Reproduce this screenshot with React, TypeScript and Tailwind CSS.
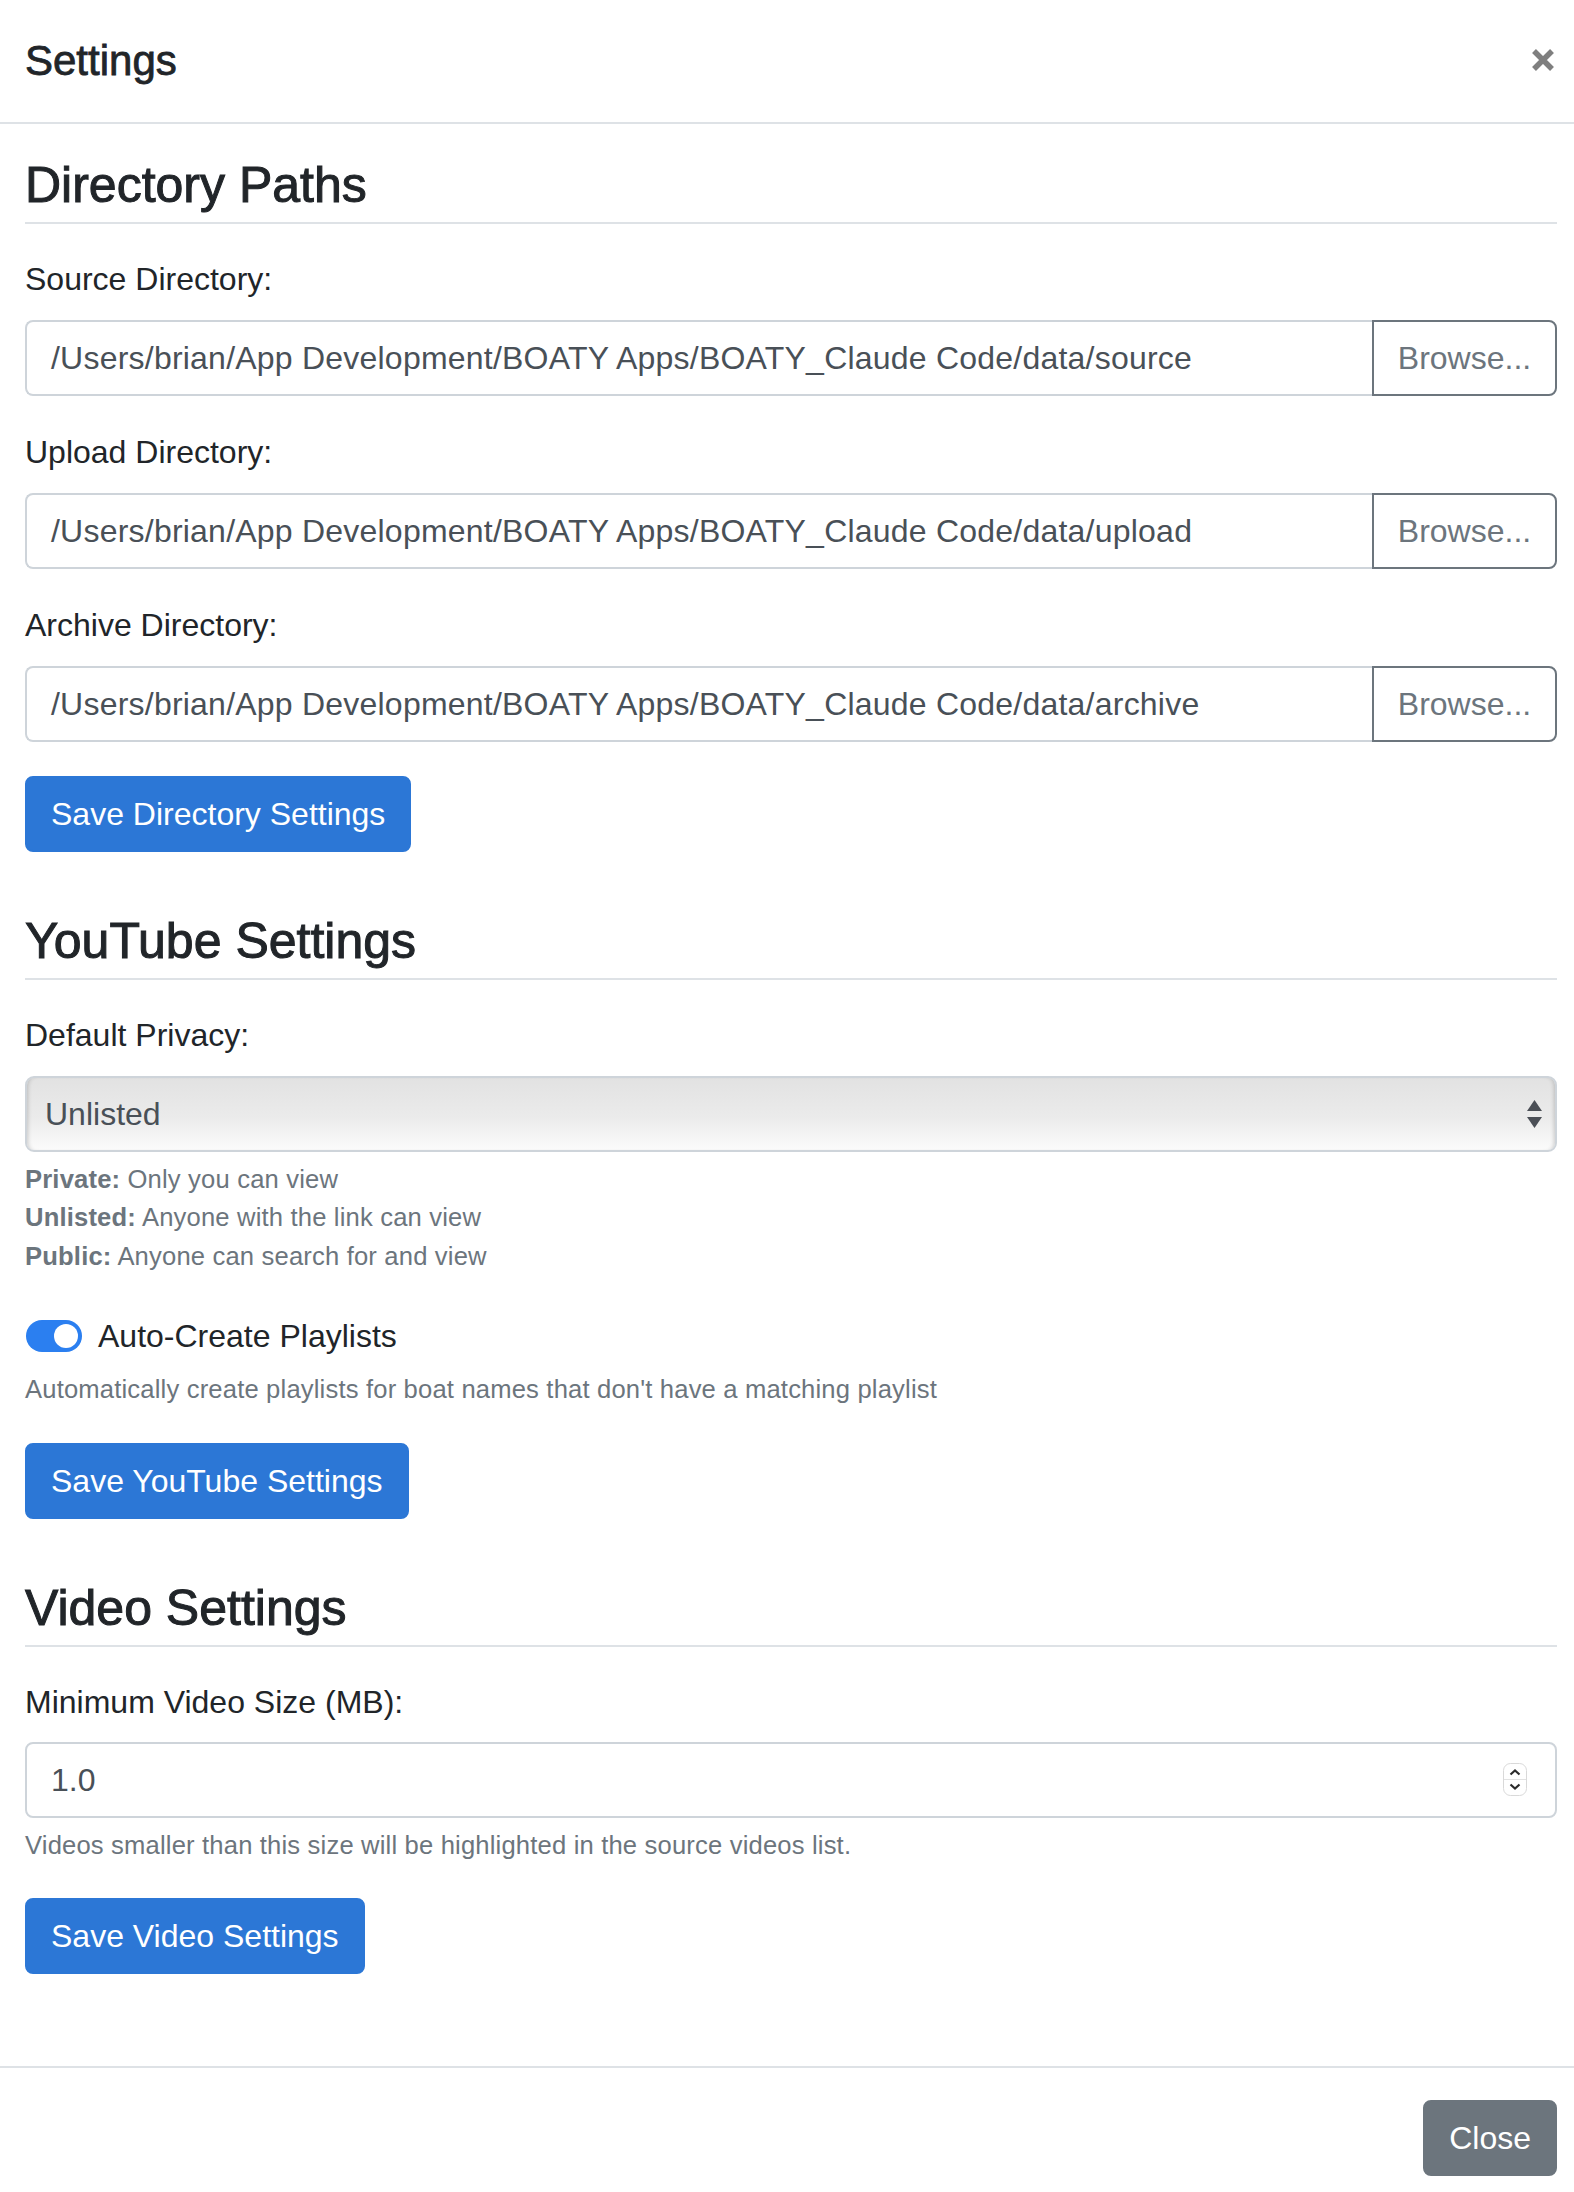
import React from 'react';

/**
 * Settings modal: directory paths, YouTube and video settings
 */

const paths = [
  { label: 'Source Directory:', value: '/Users/brian/App Development/BOATY Apps/BOATY_Claude Code/data/source' },
  { label: 'Upload Directory:', value: '/Users/brian/App Development/BOATY Apps/BOATY_Claude Code/data/upload' },
  { label: 'Archive Directory:', value: '/Users/brian/App Development/BOATY Apps/BOATY_Claude Code/data/archive' },
];

const SectionTitle: React.FC<{ title: string; first?: boolean }> = ({ title, first }) => (
  <h4
    className={`${first ? '' : 'mt-[60px]'} border-b-2 border-[#dee2e6] pb-[8px] text-[50px] leading-[58px] text-[#212529] [-webkit-text-stroke:1px_#212529]`}
  >
    {title}
  </h4>
);

const Label: React.FC<{ children: React.ReactNode; className?: string }> = ({ children, className }) => (
  <div className={`text-[32px] leading-[48px] text-[#212529] ${className ?? ''}`}>{children}</div>
);

const PrimaryButton: React.FC<{ children: React.ReactNode }> = ({ children }) => (
  <button className="mt-[34px] block h-[76px] rounded-[8px] border-2 border-[#2c77d6] bg-[#2c77d6] px-[24px] text-[32px] leading-[48px] text-white">
    {children}
  </button>
);

const SelectArrows = () => (
  <svg width="15" height="28" viewBox="0 0 15 28">
    <polygon points="0,11 7.5,0 15,11" fill="#4b4f56" />
    <polygon points="0,17 15,17 7.5,28" fill="#4b4f56" />
  </svg>
);

const Spinner = () => (
  <svg width="24" height="33" viewBox="0 0 24 33">
    <rect x="0.5" y="0.5" width="23" height="32" rx="7" fill="#ffffff" stroke="#d9d9d9" />
    <line x1="1" y1="16.5" x2="23" y2="16.5" stroke="#e2e2e2" />
    <path d="M7.5 11.5 L12 7.5 L16.5 11.5" fill="none" stroke="#2b2b2b" strokeWidth="2.2" />
    <path d="M7.5 21.5 L12 25.5 L16.5 21.5" fill="none" stroke="#2b2b2b" strokeWidth="2.2" />
  </svg>
);

export default function App() {
  return (
    <div className="w-[1574px] bg-white font-['Liberation_Sans',Arial,Helvetica,sans-serif] text-[#212529]">
      {/* Header */}
      <div className="flex h-[124px] items-center justify-between border-b-2 border-[#dee2e6] pl-[25px] pr-[19px]">
        <h5 className="text-[42px] leading-[60px] [-webkit-text-stroke:0.8px_#212529]">Settings</h5>
        <button className="-mt-[3px]">
          <svg width="24" height="24" viewBox="0 0 24 24">
            <path d="M3 3 L21 21 M21 3 L3 21" stroke="#7f7f7f" strokeWidth="5.5" />
          </svg>
        </button>
      </div>

      {/* Body */}
      <div className="pb-[92px] pl-[25px] pr-[17px] pt-[32px]">
        <SectionTitle title="Directory Paths" first />
        {paths.map((p, i) => (
          <div key={p.label} className={i === 0 ? 'mt-[31px]' : 'mt-[32px]'}>
            <Label>{p.label}</Label>
            <div className="mt-[17px] flex h-[76px]">
              <div className="flex flex-1 items-center rounded-l-[8px] border-2 border-r-0 border-[#ced4da] pl-[24px] text-[32px] tracking-[0.22px] text-[#495057]">
                {p.value}
              </div>
              <button className="w-[185px] rounded-r-[8px] border-2 border-[#6c757d] text-[32px] text-[#6c757d]">
                Browse...
              </button>
            </div>
          </div>
        ))}
        <PrimaryButton>Save Directory Settings</PrimaryButton>

        <SectionTitle title="YouTube Settings" />
        <Label className="mt-[31px]">Default Privacy:</Label>
        <div className="mt-[17px] flex h-[76px] items-center justify-between rounded-[9px] border-2 border-[#ced4da] bg-[linear-gradient(to_bottom,#e2e2e2,#ebebeb_55%,#fbfbfb)] pl-[18px] pr-[13px] text-[32px] text-[#495057] shadow-[inset_4px_0_4px_-3px_rgba(0,0,0,0.18),inset_-4px_0_4px_-3px_rgba(0,0,0,0.18)]">
          <span>Unlisted</span>
          <SelectArrows />
        </div>
        <div className="mt-[8px] text-[25.6px] leading-[38.4px] tracking-[0.17px] text-[#6c757d]">
          <div><span className="font-bold">Private:</span> Only you can view</div>
          <div><span className="font-bold">Unlisted:</span> Anyone with the link can view</div>
          <div><span className="font-bold">Public:</span> Anyone can search for and view</div>
        </div>
        <div className="mt-[37px] flex h-[48px] items-center">
          <div className="relative ml-[1px] h-[32px] w-[56px] rounded-full bg-[#2b7ff0]">
            <div className="absolute left-[28px] top-[4px] h-[24px] w-[24px] rounded-full bg-white" />
          </div>
          <span className="ml-[16px] text-[32px] leading-[48px]">Auto-Create Playlists</span>
        </div>
        <div className="mt-[10px] text-[25.6px] leading-[38.4px] tracking-[0.17px] text-[#6c757d]">
          Automatically create playlists for boat names that don't have a matching playlist
        </div>
        <PrimaryButton>Save YouTube Settings</PrimaryButton>

        <SectionTitle title="Video Settings" />
        <Label className="mt-[31px]">Minimum Video Size (MB):</Label>
        <div className="mt-[16px] flex h-[76px] items-center justify-between rounded-[8px] border-2 border-[#ced4da] pl-[24px] pr-[28px] text-[32px] text-[#495057]">
          <span>1.0</span>
          <Spinner />
        </div>
        <div className="mt-[8px] text-[25.6px] leading-[38.4px] tracking-[0.17px] text-[#6c757d]">
          Videos smaller than this size will be highlighted in the source videos list.
        </div>
        <PrimaryButton>Save Video Settings</PrimaryButton>
      </div>

      {/* Footer */}
      <div className="flex justify-end border-t-2 border-[#dee2e6] pb-[32px] pr-[17px] pt-[32px]">
        <button className="h-[76px] rounded-[8px] border-2 border-[#6c757d] bg-[#6c757d] px-[24px] text-[32px] text-white">
          Close
        </button>
      </div>
    </div>
  );
}
